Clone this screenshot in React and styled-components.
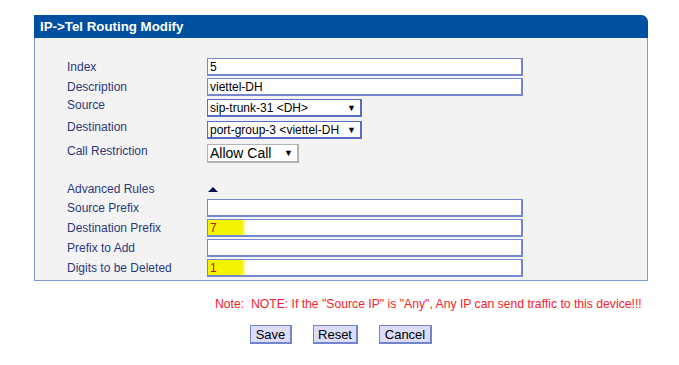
import React from 'react'
import styled, { createGlobalStyle } from 'styled-components'

const GlobalStyle = createGlobalStyle`
  body {
    margin: 0;
    background: #ffffff;
    font-family: "Liberation Sans", Arial, sans-serif;
  }
`

const Page = styled.div`
  padding: 15px 0 0 34px;
  width: 645px;
`

const Panel = styled.section`
  width: 612px;
  border: 1px solid #7d9bd6;
  border-top: none;
  border-radius: 0 7px 0 0;
  background: #f3f3f3;
`

const Header = styled.div`
  height: 23px;
  background: #0050a2;
  border-radius: 0 7px 0 0;
  margin: 0 -1px;
  display: flex;
  align-items: center;
  padding-left: 6px;
  color: #ffffff;
  font-size: 13.3px;
  font-weight: bold;
`

const Body = styled.div`
  padding: 19px 0 2px 32px;
  display: flex;
  flex-direction: column;
`

const Row = styled.div`
  display: flex;
  align-items: center;
  height: ${({ h }) => h || 20}px;
  margin-top: ${({ top }) => top || 0}px;
`

const Label = styled.div`
  width: 140px;
  font-size: 12px;
  color: #2b3a7c;
  margin-top: ${({ up }) => (up ? -6 : 0)}px;
`

const TextInput = styled.input`
  box-sizing: border-box;
  width: 316px;
  height: 18px;
  padding: 0 2px;
  border: 2px solid #7487cf;
  border-width: 1px 2px 2px 1px;
  font-family: "Liberation Sans", Arial, sans-serif;
  font-size: 12px;
  color: ${({ hl }) => (hl ? '#b8140a' : '#000')};
  outline: none;
  background: ${({ hl }) =>
    hl
      ? 'linear-gradient(to right, #f4f400 0, #f4f400 34px, #ffffff 38px)'
      : '#ffffff'};
`

const SelectBox = styled.div`
  box-sizing: border-box;
  width: ${({ w }) => w}px;
  height: ${({ hgt }) => hgt || 18}px;
  border: 2px solid ${({ gray }) => (gray ? '#b3b3b3' : '#5a6dc4')};
  border-width: 1px 2px 2px 1px;
  background: #ffffff;
  display: flex;
  align-items: center;
  justify-content: space-between;
  padding: 0 4px 0 2px;
  font-size: ${({ big }) => (big ? 14 : 12)}px;
  color: #000;
  white-space: nowrap;
  overflow: hidden;
`

const Arrow = styled.span`
  font-size: 9px;
  margin-left: 4px;
`

const Toggle = styled.span`
  width: 0;
  height: 0;
  margin-left: 1px;
  border-left: 5px solid transparent;
  border-right: 5px solid transparent;
  border-bottom: 5px solid #000c52;
`

const Note = styled.div`
  margin: 16px 0 0 181px;
  font-size: 12.2px;
  color: #f4232a;
  white-space: nowrap;
`

const Actions = styled.div`
  display: flex;
  gap: 21px;
  margin: 14px 0 0 216px;
`

const Button = styled.button`
  box-sizing: border-box;
  height: 19px;
  width: ${({ w }) => w}px;
  padding: 0;
  background: #dcdcf6;
  border: 2px solid #7384cf;
  border-width: 1px 2px 2px 1px;
  font-family: "Liberation Sans", Arial, sans-serif;
  font-size: 13px;
  color: #000;
`

const App = () => {
  return (
    <Page>
      <GlobalStyle />
      <Panel>
        <Header>IP-&gt;Tel Routing Modify</Header>
        <Body>
          <Row>
            <Label>Index</Label>
            <TextInput defaultValue="5" />
          </Row>
          <Row>
            <Label>Description</Label>
            <TextInput defaultValue="viettel-DH" />
          </Row>
          <Row h={22}>
            <Label up>Source</Label>
            <SelectBox w={155}>
              sip-trunk-31 &lt;DH&gt;<Arrow>▼</Arrow>
            </SelectBox>
          </Row>
          <Row h={22}>
            <Label up>Destination</Label>
            <SelectBox w={155}>
              port-group-3 &lt;viettel-DH<Arrow>▼</Arrow>
            </SelectBox>
          </Row>
          <Row h={25}>
            <Label up>Call Restriction</Label>
            <SelectBox w={92} hgt={19} gray big>
              Allow Call<Arrow>▼</Arrow>
            </SelectBox>
          </Row>
          <Row h={18} top={14}>
            <Label>Advanced Rules</Label>
            <Toggle />
          </Row>
          <Row>
            <Label>Source Prefix</Label>
            <TextInput defaultValue="" />
          </Row>
          <Row>
            <Label>Destination Prefix</Label>
            <TextInput hl defaultValue="7" />
          </Row>
          <Row>
            <Label>Prefix to Add</Label>
            <TextInput defaultValue="" />
          </Row>
          <Row>
            <Label>Digits to be Deleted</Label>
            <TextInput hl defaultValue="1" />
          </Row>
        </Body>
      </Panel>
      <Note>Note:&nbsp; NOTE: If the "Source IP" is "Any", Any IP can send traffic to this device!!!</Note>
      <Actions>
        <Button w={42}>Save</Button>
        <Button w={45}>Reset</Button>
        <Button w={53}>Cancel</Button>
      </Actions>
    </Page>
  )
}

export default App
